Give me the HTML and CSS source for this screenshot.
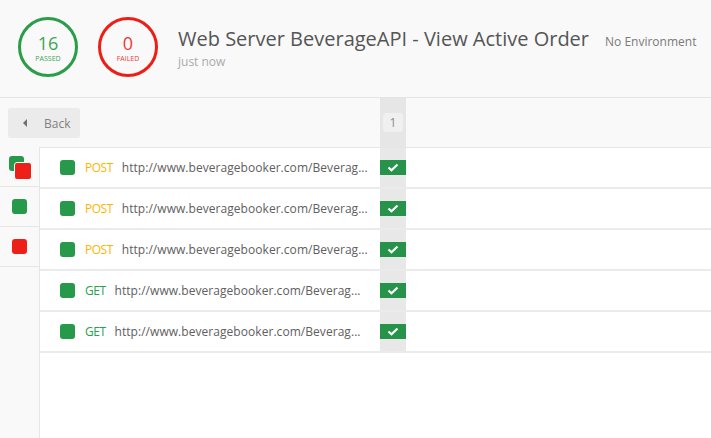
FILE: index.html
```html
<!DOCTYPE html>
<html>
<head>
<meta charset="utf-8">
<link rel="stylesheet" href="styles.css">
</head>
<body>
<div class="header">
  <div class="stat stat-pass"><span class="stat-num">16</span><span class="stat-label">PASSED</span></div>
  <div class="stat stat-fail"><span class="stat-num">0</span><span class="stat-label">FAILED</span></div>
  <div class="title-block">
    <div class="title-line"><span class="title">Web Server BeverageAPI - View Active Order</span><span class="env">No Environment</span></div>
    <div class="time">just now</div>
  </div>
</div>
<div class="toolbar">
  <div class="toolbar-left">
    <button class="back"><span class="tri"></span>Back</button>
  </div>
  <div class="col-head"><span class="col-num">1</span></div>
</div>
<div class="content">
  <div class="sidebar">
    <div class="side-item"><span class="stack"><span class="sq sq-green small"></span><span class="sq sq-red over"></span></span></div>
    <div class="side-item"><span class="sq sq-green"></span></div>
    <div class="side-item"><span class="sq sq-red"></span></div>
  </div>
  <div class="main">
    <div class="row">
      <div class="req"><span class="sq sq-green"></span><span class="method post">POST</span><span class="url">http://www.beveragebooker.com/Beverag...</span></div>
      <div class="cell"><span class="ok"><svg width="12" height="9" viewBox="0 0 12 9"><path d="M1.5 4.5 L4.5 7.3 L10.5 1.5" fill="none" stroke="#fff" stroke-width="2.2"/></svg></span></div>
      <div class="rest"></div>
    </div>
    <div class="row">
      <div class="req"><span class="sq sq-green"></span><span class="method post">POST</span><span class="url">http://www.beveragebooker.com/Beverag...</span></div>
      <div class="cell"><span class="ok"><svg width="12" height="9" viewBox="0 0 12 9"><path d="M1.5 4.5 L4.5 7.3 L10.5 1.5" fill="none" stroke="#fff" stroke-width="2.2"/></svg></span></div>
      <div class="rest"></div>
    </div>
    <div class="row">
      <div class="req"><span class="sq sq-green"></span><span class="method post">POST</span><span class="url">http://www.beveragebooker.com/Beverag...</span></div>
      <div class="cell"><span class="ok"><svg width="12" height="9" viewBox="0 0 12 9"><path d="M1.5 4.5 L4.5 7.3 L10.5 1.5" fill="none" stroke="#fff" stroke-width="2.2"/></svg></span></div>
      <div class="rest"></div>
    </div>
    <div class="row">
      <div class="req"><span class="sq sq-green"></span><span class="method get">GET</span><span class="url">http://www.beveragebooker.com/Beverag...</span></div>
      <div class="cell"><span class="ok"><svg width="12" height="9" viewBox="0 0 12 9"><path d="M1.5 4.5 L4.5 7.3 L10.5 1.5" fill="none" stroke="#fff" stroke-width="2.2"/></svg></span></div>
      <div class="rest"></div>
    </div>
    <div class="row">
      <div class="req"><span class="sq sq-green"></span><span class="method get">GET</span><span class="url">http://www.beveragebooker.com/Beverag...</span></div>
      <div class="cell"><span class="ok"><svg width="12" height="9" viewBox="0 0 12 9"><path d="M1.5 4.5 L4.5 7.3 L10.5 1.5" fill="none" stroke="#fff" stroke-width="2.2"/></svg></span></div>
      <div class="rest"></div>
    </div>
  </div>
</div>
</body>
</html>
```
FILE: styles.css
```css
* { box-sizing: border-box; }
html, body { margin: 0; padding: 0; height: 100%; }
body {
  font-family: "Open Sans", "Liberation Sans", sans-serif;
  background: #f9f9f9;
  color: #505050;
  display: flex;
  flex-direction: column;
  overflow: hidden;
}
.header {
  height: 98px;
  flex: none;
  border-bottom: 1px solid #e4e4e4;
  display: flex;
  align-items: flex-start;
  padding: 17px 0 0 18px;
}
.stat {
  width: 60px;
  height: 60px;
  border-radius: 50%;
  border: 3px solid;
  display: flex;
  flex-direction: column;
  align-items: center;
  justify-content: center;
  margin-right: 20px;
}
.stat-pass { border-color: #2a9d48; color: #3aa655; }
.stat-fail { border-color: #ec1f17; color: #ee3a33; }
.stat-num { font-size: 18px; line-height: 20px; margin-top: 2px; }
.stat-label { font-size: 7px; line-height: 10px; margin-top: 1px; }
.title-block { padding-top: 8px; margin-left: 0; }
.title-line { display: flex; align-items: baseline; }
.title { font-size: 20px; color: #555555; line-height: 28px; }
.env { font-size: 12px; color: #7a7a7a; margin-left: 16px; }
.time { font-size: 12px; color: #aaaaaa; line-height: 16px; margin-top: 1px; }

.toolbar {
  height: 49px;
  flex: none;
  display: flex;
}
.toolbar-left { width: 380px; padding: 10px 0 0 8px; }
.back {
  width: 72px;
  height: 30px;
  background: #ebebeb;
  border: none;
  border-radius: 3px;
  font-family: inherit;
  font-size: 12px;
  color: #808080;
  display: flex;
  align-items: center;
  padding: 0 0 0 15px;
}
.tri {
  width: 0; height: 0;
  border-top: 4px solid transparent;
  border-bottom: 4px solid transparent;
  border-right: 4px solid #707070;
  margin-right: 17px;
}
.col-head {
  width: 26px;
  background: #e6e6e6;
  padding: 15px 0 0 3px;
}
.col-num {
  display: flex;
  width: 20px;
  height: 19px;
  background: #f0f0f0;
  border-radius: 3px;
  font-size: 12px;
  color: #8a8a8a;
  align-items: center;
  justify-content: center;
}

.content { flex: 1; display: flex; min-height: 0; }
.sidebar {
  width: 40px;
  flex: none;
  border-right: 1px solid #e6e6e6;
  background: #f9f9f9;
}
.side-item {
  height: 40px;
  border-bottom: 1px solid #e6e6e6;
  display: flex;
  align-items: center;
  justify-content: center;
}
.stack { display: block; width: 24px; height: 24px; position: relative; }
.stack .small { position: absolute; left: 1px; top: 1px; }
.stack .over {
  position: absolute; left: 6px; top: 7px;
  width: 18px; height: 18px;
  border: 1px solid #fff;
}
.sq { display: block; width: 15px; height: 15px; border-radius: 3px; flex: none; }
.sq-green { background: #26994a; }
.sq-red { background: #ed2019; }

.main {
  flex: 1;
  background: #fff;
  border-top: 1px solid #e6e6e6;
}
.row {
  height: 41px;
  display: flex;
  border-bottom: 2px solid #ebebeb;
}
.req {
  width: 340px;
  display: flex;
  align-items: center;
  padding-left: 20px;
  font-size: 12px;
}
.method { margin-left: 10px; font-size: 12px; letter-spacing: -0.5px; }
.post { color: #ffb400; }
.get { color: #27a04f; }
.url {
  color: #606060;
  margin-left: 9px;
  white-space: nowrap;
  letter-spacing: 0.05px;
}
.get + .url { margin-left: 9px; }
.cell {
  width: 26px;
  background: #e8e8e8;
  display: flex;
  align-items: center;
}
.ok {
  display: flex;
  width: 26px;
  height: 15px;
  background: #27924a;
  align-items: center;
  justify-content: center;
}
.rest { flex: 1; }
```
